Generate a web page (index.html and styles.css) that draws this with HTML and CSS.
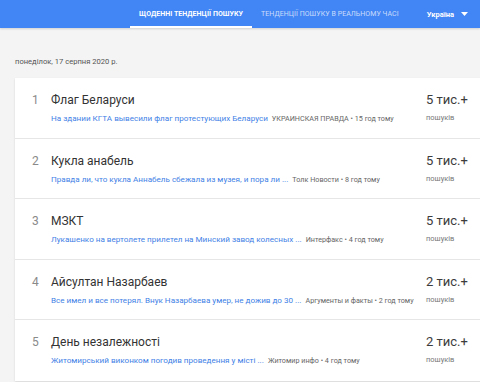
FILE: index.html
```html
<!DOCTYPE html>
<html lang="uk">
<head>
<meta charset="utf-8">
<link rel="stylesheet" href="styles.css">
</head>
<body>
<header class="topbar">
  <nav class="tabs">
    <a class="tab tab-active">Щоденні тенденції пошуку</a>
    <a class="tab">Тенденції пошуку в реальному часі</a>
  </nav>
  <div class="region">Україна <svg class="caret" width="7" height="4" viewBox="0 0 7 4"><path d="M0 0h7L3.5 4z" fill="#fff"/></svg></div>
</header>
<main class="content">
  <div class="date">понеділок, 17 серпня 2020 р.</div>
  <section class="card">
    <div class="row">
      <div class="num">1</div>
      <div class="body">
        <div class="title">Флаг Беларуси</div>
        <div class="sub"><span class="link">На здании КГТА вывесили флаг протестующих Беларуси</span><span class="src">УКРАИНСКАЯ ПРАВДА • 15 год тому</span></div>
      </div>
      <div class="count"><div class="big">5 тис.+</div><div class="small">пошуків</div></div>
    </div>
    <div class="row">
      <div class="num">2</div>
      <div class="body">
        <div class="title">Кукла анабель</div>
        <div class="sub"><span class="link">Правда ли, что кукла Аннабель сбежала из музея, и пора ли ...</span><span class="src">Толк Новости • 8 год тому</span></div>
      </div>
      <div class="count"><div class="big">5 тис.+</div><div class="small">пошуків</div></div>
    </div>
    <div class="row">
      <div class="num">3</div>
      <div class="body">
        <div class="title">МЗКТ</div>
        <div class="sub"><span class="link">Лукашенко на вертолете прилетел на Минский завод колесных ...</span><span class="src">Интерфакс • 4 год тому</span></div>
      </div>
      <div class="count"><div class="big">5 тис.+</div><div class="small">пошуків</div></div>
    </div>
    <div class="row">
      <div class="num">4</div>
      <div class="body">
        <div class="title">Айсултан Назарбаев</div>
        <div class="sub"><span class="link">Все имел и все потерял. Внук Назарбаева умер, не дожив до 30 ...</span><span class="src">Аргументы и факты • 2 год тому</span></div>
      </div>
      <div class="count"><div class="big">2 тис.+</div><div class="small">пошуків</div></div>
    </div>
    <div class="row">
      <div class="num">5</div>
      <div class="body">
        <div class="title">День незалежності</div>
        <div class="sub"><span class="link">Житомирський виконком погодив проведення у місті ...</span><span class="src">Житомир инфо • 4 год тому</span></div>
      </div>
      <div class="count"><div class="big">2 тис.+</div><div class="small">пошуків</div></div>
    </div>
  </section>
</main>
</body>
</html>
```

FILE: styles.css
```css
html, body {
  margin: 0;
  padding: 0;
  overflow: hidden;
}
body {
  width: 480px;
  height: 382px;
  background: #f4f4f4;
  font-family: Roboto, "Liberation Sans", sans-serif;
  color: #333;
}
.topbar {
  height: 28px;
  background: #4285f4;
  display: flex;
  align-items: stretch;
  box-shadow: 0 1px 2px rgba(0,0,0,0.15);
}
.tabs {
  display: flex;
  margin-left: 130px;
}
.tab {
  display: flex;
  align-items: center;
  padding: 0 9px;
  font-size: 7px;
  text-transform: uppercase;
  color: rgba(255,255,255,0.72);
  border-bottom: 2px solid transparent;
  padding-top: 2px;
  box-sizing: border-box;
  letter-spacing: 0.05px;
}
.tab-active {
  color: #fff;
  font-weight: 700;
  border-bottom-color: #fff;
}
.region {
  margin-left: auto;
  margin-right: 12px;
  display: flex;
  align-items: center;
  gap: 7px;
  color: #fff;
  font-size: 7.5px;
  font-weight: 700;
}
.content {
  padding: 0 0 0 15px;
}
.date {
  margin-top: 29px;
  font-size: 7.6px;
  color: #555;
  height: 10px;
  line-height: 10px;
}
.card {
  margin-top: 11px;
  width: 480px;
  background: #fff;
  box-shadow: 0 1px 2px rgba(0,0,0,0.12);
}
.row {
  display: flex;
  height: 60.5px;
  box-sizing: border-box;
  border-bottom: 1px solid #e6e6e6;
  padding-left: 17px;
  padding-right: 19px;
}
.row:last-child {
  border-bottom: none;
}
.num {
  width: 19px;
  padding-top: 14px;
  font-size: 12px;
  line-height: 16px;
  color: #8a8a8a;
}
.body {
  flex: 1;
  padding-top: 14px;
}
.title {
  font-size: 12px;
  line-height: 16px;
  color: #333;
}
.sub {
  margin-top: 5px;
  line-height: 10px;
  white-space: nowrap;
  display: flex;
  align-items: baseline;
  gap: 4px;
}
.link {
  font-size: 8.1px;
  color: #3f7fe6;
}
.src {
  font-size: 7.2px;
  color: #666;
}
.count {
  width: 50px;
  padding-top: 14px;
}
.big {
  font-size: 13px;
  line-height: 16px;
  color: #3c3c3c;
}
.small {
  margin-top: 5px;
  font-size: 7.5px;
  line-height: 10px;
  color: #777;
}
```
